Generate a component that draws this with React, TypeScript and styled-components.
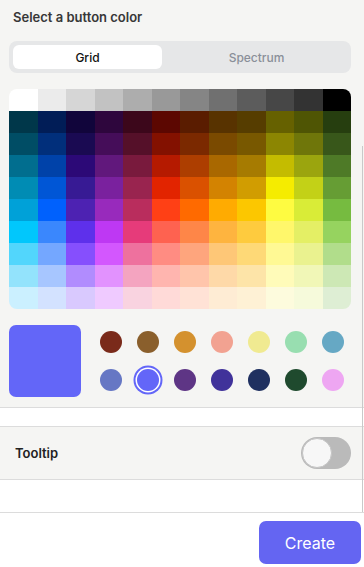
import React from "react";
import styled, { createGlobalStyle } from "styled-components";

const Global = createGlobalStyle`
  html, body { margin: 0; padding: 0; }
  body {
    background: #f5f5f3;
    font-family: Inter, "Noto Sans", "Liberation Sans", sans-serif;
    -webkit-font-smoothing: antialiased;
  }
  * { box-sizing: border-box; }
`;

const Page = styled.div`
  width: 364px;
  height: 567px;
  display: flex;
  flex-direction: column;
  position: relative;
  overflow: hidden;
`;

const Scroll = styled.div`
  height: 512px;
  display: flex;
  flex-direction: column;
  background: #f5f5f3;
`;

const Picker = styled.div`
  padding: 0 13px 0 9px;
  display: flex;
  flex-direction: column;
`;

const Title = styled.h2`
  margin: 0;
  padding: 9px 0 0 4px;
  height: 41px;
  font-size: 13px;
  line-height: 16px;
  font-weight: 600;
  color: #373737;
`;

const Segmented = styled.div`
  height: 32px;
  background: #e6e7e8;
  border-radius: 8px;
  padding: 4px;
  display: grid;
  grid-template-columns: 149px 1fr;
  gap: 0;
`;

const Segment = styled.div<{ $active?: boolean }>`
  display: flex;
  align-items: center;
  justify-content: center;
  border-radius: 6px;
  font-size: 12px;
  font-weight: 500;
  padding-left: ${(p) => (p.$active ? "0" : "4px")};
  background: ${(p) => (p.$active ? "#ffffff" : "transparent")};
  color: ${(p) => (p.$active ? "#111111" : "#8a8f99")};
`;

const ColorGrid = styled.div`
  margin-top: 16px;
  display: grid;
  grid-template-columns: repeat(12, 1fr);
  grid-auto-rows: 22px;
  border-radius: 8px;
  overflow: hidden;
`;

const Cell = styled.div<{ $c: string }>`
  background: ${(p) => p.$c};
`;

const SwatchArea = styled.div`
  margin-top: 16px;
  display: flex;
  align-items: flex-start;
  height: 82px;
`;

const Preview = styled.div<{ $c: string }>`
  width: 72px;
  height: 72px;
  border-radius: 7px;
  background: ${(p) => p.$c};
`;

const Swatches = styled.div`
  margin-left: 19px;
  margin-top: 6px;
  display: grid;
  grid-template-columns: repeat(7, 22px);
  grid-auto-rows: 22px;
  column-gap: 15px;
  row-gap: 16px;
`;

const Swatch = styled.div<{ $c: string; $selected?: boolean }>`
  width: 22px;
  height: 22px;
  border-radius: 50%;
  background: ${(p) => p.$c};
  box-shadow: ${(p) =>
    p.$selected ? `0 0 0 1.5px #ffffff, 0 0 0 3.5px ${p.$c}` : "none"};
`;

const Blank = styled.div<{ $h: number }>`
  height: ${(p) => p.$h}px;
  background: #ffffff;
  border-top: 1px solid #dcdcdc;
`;

const Row = styled.div`
  height: 53px;
  background: #f5f5f3;
  border-top: 1px solid #dcdcdc;
  display: flex;
  align-items: center;
  justify-content: space-between;
  padding: 0 13px 0 15px;
`;

const RowLabel = styled.span`
  font-size: 13px;
  font-weight: 600;
  color: #222;
`;

const Toggle = styled.div`
  width: 50px;
  height: 32px;
  border-radius: 16px;
  background: #bababa;
  padding: 1px;
  display: flex;
  align-items: center;
`;

const Knob = styled.div`
  width: 30px;
  height: 30px;
  border-radius: 50%;
  background: #f7f7f7;
  border: 1px solid #c4c4c4;
`;

const Footer = styled.div`
  flex: 1;
  background: #ffffff;
  border-top: 1px solid #dcdcdc;
  display: flex;
  justify-content: flex-end;
  align-items: flex-start;
  padding: 8px 3px 0 0;
`;

const CreateButton = styled.button`
  width: 102px;
  height: 43px;
  border: none;
  border-radius: 7px;
  background: #6465f2;
  color: #ffffff;
  font-family: Inter, "Noto Sans", "Liberation Sans", sans-serif;
  font-size: 16px;
  font-weight: 400;
`;

const ScrollThumb = styled.div`
  position: absolute;
  right: 1px;
  top: 146px;
  width: 1px;
  height: 366px;
  background: #c9c9c9;
`;

const GRID: string[][] = [
  ["#ffffff", "#ebebeb", "#d6d6d6", "#c2c2c2", "#adadad", "#999999", "#858585", "#707070", "#5c5c5c", "#474747", "#333333", "#000000"],
  ["#00374a", "#011d57", "#11053b", "#2e063d", "#3c071b", "#5c0701", "#5a1c00", "#583300", "#563d00", "#666100", "#4f5504", "#263e0f"],
  ["#004d65", "#012f7b", "#1a0a52", "#450d59", "#551029", "#831100", "#7b2900", "#7a4a00", "#785800", "#8c8602", "#6f760a", "#38571a"],
  ["#016e8f", "#0042a9", "#2c0977", "#61187c", "#791a3d", "#b51a00", "#ad3e00", "#a96800", "#a67b01", "#c4bc00", "#9ba50e", "#4e7a27"],
  ["#008cb4", "#0056d6", "#371a94", "#7a219e", "#99244f", "#e22400", "#da5100", "#d38301", "#d19d01", "#f5ec00", "#c3d117", "#669d34"],
  ["#00a1d8", "#0061fd", "#4d22b2", "#982abc", "#b92d5d", "#ff4015", "#ff6a00", "#ffab01", "#fcc700", "#fefb41", "#d9ec37", "#76bb40"],
  ["#01c7fc", "#3a87fd", "#5e30eb", "#be38f3", "#e63b7a", "#fe6250", "#fe8648", "#feb43f", "#fecb3e", "#fff76b", "#e4ef65", "#96d35f"],
  ["#52d6fc", "#74a7ff", "#864ffd", "#d357fe", "#ee719e", "#ff8c82", "#fea57d", "#fec777", "#fed977", "#fff994", "#eaf28f", "#b1dd8b"],
  ["#93e3fc", "#a7c6ff", "#b18cfe", "#e292fe", "#f4a4c0", "#ffb5af", "#ffc5ab", "#fed9a8", "#fde4a8", "#fffbb9", "#f1f7b7", "#cde8b5"],
  ["#cbf0ff", "#d3e2ff", "#d9c9fe", "#efcaff", "#f9d3e0", "#ffdad8", "#ffe2d6", "#feecd4", "#fef1d5", "#fdfbdd", "#f6fadb", "#deeed4"],
];

const SWATCHES = [
  "#7a2a1a", "#8a5f2c", "#d4912e", "#f2a291", "#f0ea91", "#98deb0", "#66a8c4",
  "#6677c4", "#6366f8", "#5e3585", "#40329a", "#1f3060", "#1f4a2e", "#eea6f2",
];

const SELECTED = "#6366f8";

export default function App() {
  return (
    <Page>
      <Global />
      <Scroll>
        <Picker>
          <Title>Select a button color</Title>
          <Segmented>
            <Segment $active>Grid</Segment>
            <Segment>Spectrum</Segment>
          </Segmented>
          <ColorGrid>
            {GRID.flatMap((row, r) =>
              row.map((c, i) => <Cell key={`${r}-${i}`} $c={c} />)
            )}
          </ColorGrid>
          <SwatchArea>
            <Preview $c={SELECTED} />
            <Swatches>
              {SWATCHES.map((c, i) => (
                <Swatch key={i} $c={c} $selected={c === SELECTED} />
              ))}
            </Swatches>
          </SwatchArea>
        </Picker>
        <Blank $h={19} />
        <Row>
          <RowLabel>Tooltip</RowLabel>
          <Toggle>
            <Knob />
          </Toggle>
        </Row>
        <Blank $h={33} />
      </Scroll>
      <Footer>
        <CreateButton>Create</CreateButton>
      </Footer>
      <ScrollThumb />
    </Page>
  );
}
